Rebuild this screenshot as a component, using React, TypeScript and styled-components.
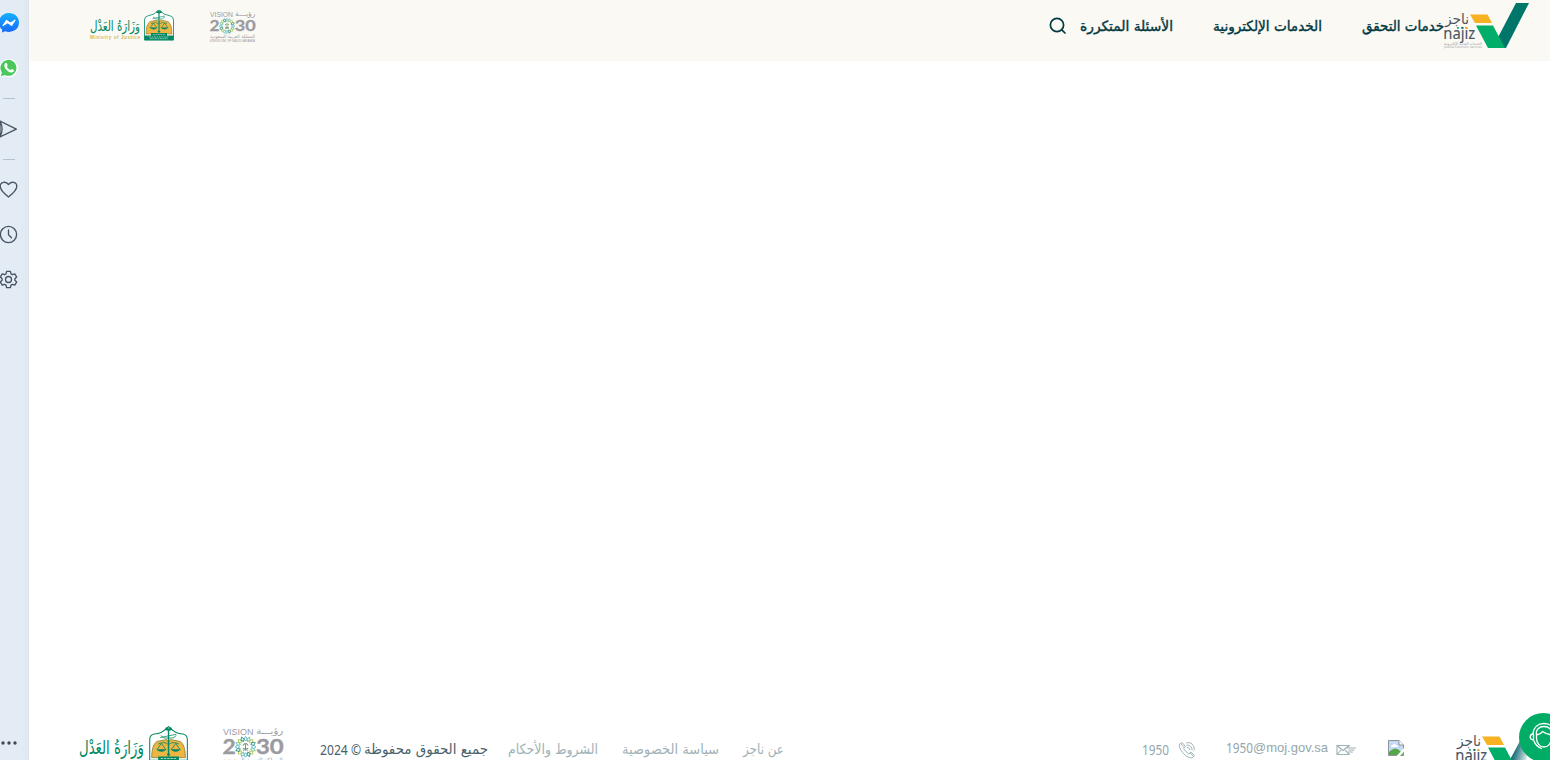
import React, { useLayoutEffect, useRef, useState } from "react";
import styled, { createGlobalStyle } from "styled-components";

const GlobalStyle = createGlobalStyle`
  * { box-sizing: border-box; }
  body { margin: 0; overflow: hidden; background: #fff; }
`;

const Page = styled.div`
  display: flex;
  width: 100%;
  height: 760px;
  overflow: hidden;
  font-family: "DejaVu Sans", sans-serif;
`;
const Sidebar = styled.aside`
  display: flex;
  flex-direction: column;
  align-items: flex-start;
  flex: none;
  width: 29px;
  padding: 13px 0 7px;
  background: linear-gradient(90deg, #e3ecf5 0 18px, #e2eaf3 23px, #dfe8f1 28px, #d9e2ec 29px);
  overflow: hidden;
`;
const SideIcon = styled.svg<{ $gap?: number }>`
  display: block;
  flex: none;
  width: 20px;
  height: 20px;
  margin-left: -1px;
  margin-top: ${(p) => p.$gap ?? 0}px;
  fill: none;
  stroke: #4a5363;
  stroke-width: 1.35;
  stroke-linejoin: round;
  stroke-linecap: round;
`;
const Separator = styled.hr`
  flex: none;
  width: 12px;
  height: 1px;
  border: 0;
  margin: 20px 0 20px 3px;
  background: #b4c0d0;
`;
const Spacer = styled.div`
  flex: 1;
`;
const Content = styled.div`
  display: flex;
  flex: 1;
  flex-direction: column;
  min-width: 0;
`;
const Header = styled.header`
  display: flex;
  align-items: flex-start;
  height: 61px;
  flex: none;
  padding: 0 21px 0 61px;
  background: #faf9f4;
`;
const Main = styled.main`
  flex: 1;
`;
const Footer = styled.footer`
  display: flex;
  align-items: flex-start;
  flex: none;
  height: 35px;
  padding: 0 9px 0 50px;
`;
const Logo = styled.svg<{ $w: number; $h: number; $top: number; $left?: number }>`
  display: block;
  flex: none;
  width: ${(p) => p.$w}px;
  height: ${(p) => p.$h}px;
  margin-top: ${(p) => p.$top}px;
  margin-left: ${(p) => p.$left ?? 0}px;
  overflow: visible;
`;
const families = {
  arabic: '"DejaVu Sans", sans-serif',
  latin: '"Liberation Sans", sans-serif',
  digits: '"Noto Sans", sans-serif',
};
type Face = keyof typeof families;
const TextBox = styled.a<{ $w: number; $top: number; $left: number; $size: number; $color: string; $bold?: boolean; $face: Face }>`
  display: block;
  flex: none;
  width: ${(p) => p.$w}px;
  height: 20px;
  margin-top: ${(p) => p.$top}px;
  margin-left: ${(p) => p.$left}px;
  font-family: ${(p) => families[p.$face]};
  font-size: ${(p) => p.$size}px;
  line-height: 20px;
  color: ${(p) => p.$color};
  white-space: nowrap;
  -webkit-text-stroke: ${(p) => (p.$bold ? "0.4px" : "0")} ${(p) => p.$color};
`;
const Fitted = styled.span`
  display: inline-block;
  transform-origin: 0 50%;
`;
const HelpButton = styled.button`
  position: fixed;
  left: 1519px;
  top: 713px;
  width: 49px;
  height: 49px;
  padding: 8px;
  border: 0;
  border-radius: 50%;
  background: #00ac66;
`;

type TextProps = { children: string; w: number; top: number; left: number; size: number; color: string; bold?: boolean; face?: Face };

/* A line of text drawn at a fixed measure, whatever the natural width of its font. */
function FitText({ children, w, top, left, size, color, bold, face = "arabic" }: TextProps) {
  const ref = useRef<HTMLSpanElement>(null);
  const [scale, setScale] = useState(1);
  useLayoutEffect(() => {
    if (ref.current) setScale(w / ref.current.getBoundingClientRect().width);
  }, []);
  return (
    <TextBox $w={w} $top={top} $left={left} $size={size} $color={color} $bold={bold} $face={face}>
      <Fitted ref={ref} dir={face === "arabic" ? "rtl" : "ltr"} style={{ transform: `scaleX(${scale})` }}>
        {children}
      </Fitted>
    </TextBox>
  );
}

function NajizLogo({ top, left, faded }: { top: number; left?: number; faded?: boolean }) {
  return (
    <Logo $w={85} $h={46} $top={top} $left={left} viewBox="0 0 85 46">
      <defs>
        <linearGradient id="fade" gradientUnits="userSpaceOnUse" x1="52" y1="30" x2="72" y2="36">
          <stop offset="0" stopColor="#00616a" />
          <stop offset=".3" stopColor="#2b7a82" />
          <stop offset=".65" stopColor="#8fb8bd" />
          <stop offset="1" stopColor="#fff" />
        </linearGradient>
      </defs>
      <path d={faded ? "M64 16L50 42L53 45H70L72 16Z" : "M72 0H85L62 45H53L50 42Z"} fill={faded ? "url(#fade)" : "#00756a"} />
      <path d="M26 11.5H43.5L48 20H31Z" fill="#f8b122" />
      <path d="M32 22.5H49L61 45H44Z" fill="#00ad69" />
      <g fill="#4a5563" fontFamily="DejaVu Sans, sans-serif">
        <text x="1" y="21" fontSize="14.5" textLength="24" lengthAdjust="spacingAndGlyphs" direction="rtl" textAnchor="end">ناجز</text>
        <text x="-.7" y="35.5" fontFamily="Noto Sans, sans-serif" fontSize="16" stroke="#4a5563" strokeWidth=".1" textLength="32" lengthAdjust="spacingAndGlyphs">najiz</text>
        <g fill="#9a9fa2">
          <text x="0" y="42" fontSize="4" textLength="38" lengthAdjust="spacingAndGlyphs" direction="rtl" textAnchor="end">الخدمات العدلية الإلكترونية</text>
          <text x="0" y="45.2" fontSize="3" textLength="38" lengthAdjust="spacingAndGlyphs">Judicial Electronic Services</text>
        </g>
      </g>
      <path d="M13 24.8h1.8" stroke="#00ad69" strokeWidth="1.8" />
      <path d="M17.3 24.8h1.8" stroke="#00756a" strokeWidth="1.8" />
      <path d="M21.3 24.8h1.8" stroke="#f8b122" strokeWidth="1.8" />
    </Logo>
  );
}

function MinistryLogo({ w, h, top }: { w: number; h: number; top: number }) {
  return (
    <Logo $w={w} $h={h} $top={top} viewBox="0 0 84 32">
      <text x="0" y="22" fontFamily="DejaVu Sans, sans-serif" fontSize="14.5" fill="#008763" textLength="50" lengthAdjust="spacingAndGlyphs" direction="rtl" textAnchor="end">وَزَارَةُ العَدْل</text>
      <text x="0" y="30" fontFamily="Liberation Sans, sans-serif" fontSize="4.6" fontWeight="bold" fill="#d3b961" textLength="50">Ministry of Justice</text>
      <path d="M54.5 31V11Q54.5 7.5 58 6.8Q64 6.5 69 1Q74 6.5 80 6.8Q83.5 7.5 83.5 11V31Z" fill="#fff" stroke="#008763" strokeWidth=".8" />
      <path d="M56 25Q56 15 60 12.5L67.5 11L69 13L70.5 11L78 12.5Q82 15 82 25Z" fill="#edb643" stroke="#8b7635" strokeWidth=".6" />
      <path d="M54.5 26.5H61V24H77V26.5H83.5V31.3H54.5Z" fill="#008763" />
      <g fill="none" stroke="#008763">
        <path d="M69 4V24M67.8 22.5h2.4" strokeWidth="1.1" />
        <path d="M63 8q2 2.5 6 2q4 .5 6-2M62.5 9.5L75 7" strokeWidth=".6" />
        <path d="M61 14.5Q66 12 69 15Q72 12 77 14.5M63.5 14l-3.5 5M63.5 14l3.5 5M74.5 14l-3.5 5M74.5 14l3.5 5" strokeWidth=".6" />
      </g>
      <path d="M66 3.5Q67.5.2 69 2.7Q70.5.2 72 3.5L69 4.5ZM59.5 18.5h8q-4 4-8 0M70.5 18.5h8q-4 4-8 0" fill="#008763" />
      <path d="M63 25.7h12M59 28h20M60 29.7h18" stroke="#a9d4bd" strokeWidth=".8" strokeDasharray="1.8 .7" />
    </Logo>
  );
}

function VisionLogo({ w, h, top, left }: { w: number; h: number; top: number; left: number }) {
  const rays = Array.from({ length: 16 }, (_, i) => i);
  const colors = ["#56b6c9", "#78c5aa", "#b9cf62", "#3e9d86"];
  return (
    <Logo $w={w} $h={h} $top={top} $left={left} viewBox="0 0 46 31">
      <g fill="#9b9b9f" fontFamily="Liberation Sans, sans-serif">
        <text x="0" y="5.8" fontSize="6.7" textLength="23" lengthAdjust="spacingAndGlyphs">VISION</text>
        <text x="25" y="5.3" fontFamily="DejaVu Sans, sans-serif" fontSize="7" textLength="20.5" lengthAdjust="spacingAndGlyphs" direction="rtl" textAnchor="end">رؤيـــة</text>
        <g fontFamily="Lato, sans-serif" fontWeight="bold" fontSize="16" stroke="#9b9b9f" strokeWidth=".3">
          <text x="-.4" y="20.4" textLength="10" lengthAdjust="spacingAndGlyphs">2</text>
          <text x="24.8" y="20.4" textLength="21" lengthAdjust="spacingAndGlyphs">30</text>
        </g>
        <text x="0" y="26.5" fontFamily="DejaVu Sans, sans-serif" fontSize="4.6" textLength="45" lengthAdjust="spacingAndGlyphs" direction="rtl" textAnchor="end">المملكة العربية السعودية</text>
        <text x="0" y="30.5" fontSize="2.7" textLength="45" lengthAdjust="spacingAndGlyphs">KINGDOM OF SAUDI ARABIA</text>
      </g>
      <g transform="translate(17 15)" fill="none">
        {rays.map((i) => (
          <path key={i} transform={`rotate(${i * 22.5})`} d="M0-4.4L1.3-6L0-7.8L-1.3-6Z" stroke={colors[i % 4]} strokeWidth=".75" />
        ))}
        <path d="M0 3V-2M-2-1Q0-4 2-1M-2 2.5L2 1M2 2.5L-2 1" stroke="#71967e" strokeWidth=".8" />
      </g>
    </Logo>
  );
}

function Rail() {
  return (
    <Sidebar>
      <SideIcon viewBox="0 0 20 20">
        <defs>
          <linearGradient id="msg" x2="0" y2="1"><stop stopColor="#13b2ff" /><stop offset="1" stopColor="#1768fa" /></linearGradient>
        </defs>
        <path d="M10 0C4.2 0 0 4.1 0 9.6c0 3 1.2 5.3 3.1 7v3l3-1.3C13.6 20.5 20 16.4 20 9.6 20 4.1 15.8 0 10 0Z" fill="url(#msg)" stroke="none" />
        <path d="M4 12.6L7.5 7.5L11.3 10.2L16 7.2L12.5 12.3L8.7 9.5Z" fill="#fff" stroke="#fff" strokeWidth="1.2" />
      </SideIcon>
      <SideIcon $gap={25} viewBox="0 0 20 20">
        <path d="M.5 19.5L1.7 14.6A9.2 9.2 0 1 1 5.5 18.2Z" fill="#fff" stroke="none" />
        <path d="M1.8 18.2L2.9 14.5A8 8 0 1 1 5.8 17Z" fill="#4bc65a" stroke="none" />
        <path d="M5.9 5.4c.6-.8 1.5-.8 1.9-.1l.9 2.1-.8 1.3c.8 1.6 2 2.6 3.5 3.3l1.3-1.1 2.2 1.1c.6.6 0 1.5-.8 2.1-1.6 1-4.3 0-6.2-1.9C5.8 10.3 4.5 7.1 5.9 5.4Z" fill="#fff" stroke="none" />
      </SideIcon>
      <Separator />
      <SideIcon viewBox="0 0 20 20"><path d="M1 2L17.3 10.2L1 18Q5.2 10 1 2ZM1 2V18" /></SideIcon>
      <Separator />
      <SideIcon viewBox="0 .5 20 20"><path d="M9.5 17.5C6 14.8 1.2 11 1.2 6.8C1.2 2.2 7 1.4 9.5 5C12 1.4 17.8 2.2 17.8 6.8C17.8 11 13 14.8 9.5 17.5Z" /></SideIcon>
      <SideIcon $gap={25} viewBox="0 1 20 20"><circle cx="9.5" cy="10.5" r="8.1" /><path d="M9.5 6v4.8l3 3" /></SideIcon>
      <SideIcon $gap={25} viewBox="0 1 20 20">
        <circle cx="9.5" cy="10.5" r="3" />
        <path d="M7.6 2.4h3.8l.6 2.5 1.4.8 2.4-.8 1.9 3.2-1.8 1.7v1.4l1.8 1.7-1.9 3.2-2.4-.8-1.4.8-.6 2.5H7.6L7 16.1l-1.4-.8-2.4.8-1.9-3.2 1.8-1.7V9.8L1.3 8.1l1.9-3.2 2.4.8L7 4.9Z" />
      </SideIcon>
      <Spacer />
      <SideIcon viewBox="0 0 20 20"><g fill="#414852" stroke="none"><circle cx="4" cy="10" r="1.7" /><circle cx="10" cy="10" r="1.7" /><circle cx="16" cy="10" r="1.7" /></g></SideIcon>
    </Sidebar>
  );
}

export default function App() {
  const ink = "#023842";
  const muted = "#9fb2b7";
  const contact = "#93a6ab";
  const copy = "#47616a";
  return (
    <>
      <GlobalStyle />
      <Page>
        <Rail />
        <Content>
          <Header>
            <MinistryLogo w={84} h={32} top={9} />
            <VisionLogo w={46} h={31} top={11} left={36} />
            <Spacer />
            <Logo $w={18} $h={18} $top={17} viewBox="0 0 18 18" fill="none" stroke={ink} strokeWidth="1.7" strokeLinecap="round">
              <circle cx="8" cy="8" r="6.6" /><path d="M12.8 12.8l3.2 3.2" />
            </Logo>
            <FitText w={93} top={16} left={13} size={14} color={ink} bold>الأسئلة المتكررة</FitText>
            <FitText w={109} top={16} left={40} size={14} color={ink} bold>الخدمات الإلكترونية</FitText>
            <FitText w={82} top={16} left={40} size={14} color={ink} bold>خدمات التحقق</FitText>
            <NajizLogo top={3} />
          </Header>
          <Main />
          <Footer>
            <MinistryLogo w={109} h={42} top={0} />
            <VisionLogo w={61} h={41} top={2} left={35} />
            <FitText w={41} top={14} left={36} size={14.5} color={copy} face="digits">2024 ©</FitText>
            <FitText w={124} top={14} left={3} size={14} color={copy}>جميع الحقوق محفوظة</FitText>
            <FitText w={90} top={14} left={20} size={14} color={muted}>الشروط والأحكام</FitText>
            <FitText w={97} top={14} left={24} size={14} color={muted}>سياسة الخصوصية</FitText>
            <FitText w={41} top={14} left={24} size={14} color={muted}>عن ناجز</FitText>
            <Spacer />
            <FitText w={27} top={15} left={0} size={14} color={contact} face="digits">1950</FitText>
            <Logo $w={18} $h={18} $top={16} $left={9} viewBox="0 0 18 18" fill="none" stroke={muted} strokeWidth="1">
              <path d="M4.2 1.5L2 2.8C-.2 5 3.5 11.2 7.5 14.4c3.2 2.5 6.6 3.3 8.2 1.3l.8-1.4-3.6-3.2-2 1.6C8.5 11.5 6.8 9.7 5.6 7.3l1.7-1.9ZM3 3l3 3.5M12 12l3.5 3.3M8.3 2c4.2-1.8 9 2.5 7.8 7.3M8.5 4.2c3.2-.7 6 2 5.4 5M8.7 6.3c1.7 0 3 1 3.1 2.8" />
            </Logo>
            <FitText w={27} top={13} left={30} size={14} color={contact} face="digits">1950</FitText>
            <FitText w={75} top={13} left={0} size={13.6} color={contact} face="latin">@moj.gov.sa</FitText>
            <Logo $w={21} $h={12} $top={19} $left={8} viewBox="0 0 21 12" fill="none" stroke={muted} strokeWidth="1.1">
              <path d="M13 3V1.5H1v9h12V9M1 1.5l6 5 6-5M1 10.5l4.5-5M13 10.5L9 5.8M11 4h9M12.5 6h6M11 8h6" />
            </Logo>
            <Logo $w={16} $h={16} $top={15} $left={31} viewBox="0 0 16 16">
              <path d="M.5.5H11l4.5 4.5v10.5H.5Z" fill="#c5d8f6" stroke="#8f9296" />
              <path d="M11 .5V5h4.5" fill="#fff" stroke="#8f9296" />
              <path d="M3 7q0-2 1.7-1.7Q6 2 8 5q2 0 2 2Z" fill="#fff" />
              <path d="M1 15v-3q6-6 10-2l4 4v1Z" fill="#55a847" />
              <path d="M8 16.5L16.5 7.5v3.5L11.5 16.5Z" fill="#fff" />
            </Logo>
            <NajizLogo top={0} left={52} faded />
          </Footer>
        </Content>
        <HelpButton aria-label="help">
          <svg width="33" height="33" viewBox="0 0 33 33" fill="none" stroke="#fff" strokeWidth="1.3" strokeLinecap="round" strokeLinejoin="round">
            <path d="M6 13C6.5 6 11 2.500 17 2.500S27.500 6 28 13" />
            <path d="M9.500 14C8.500 8.500 12 5.500 17 5.500S25.500 8.500 24.500 14" />
            <path d="M6 13q-2.800 .3-2.800 3t3.300 3V13M28 13q2.800 .3 2.800 3t-3.300 3V13" />
            <path d="M9.500 14q4-.5 6-3.500q4 3 9 3.500v3c0 5.500-3.500 9-7.500 9s-7.500-3.500-7.500-9Z" />
            <path d="M7 20q1.500 5 7.500 7.500" />
          </svg>
        </HelpButton>
      </Page>
    </>
  );
}
